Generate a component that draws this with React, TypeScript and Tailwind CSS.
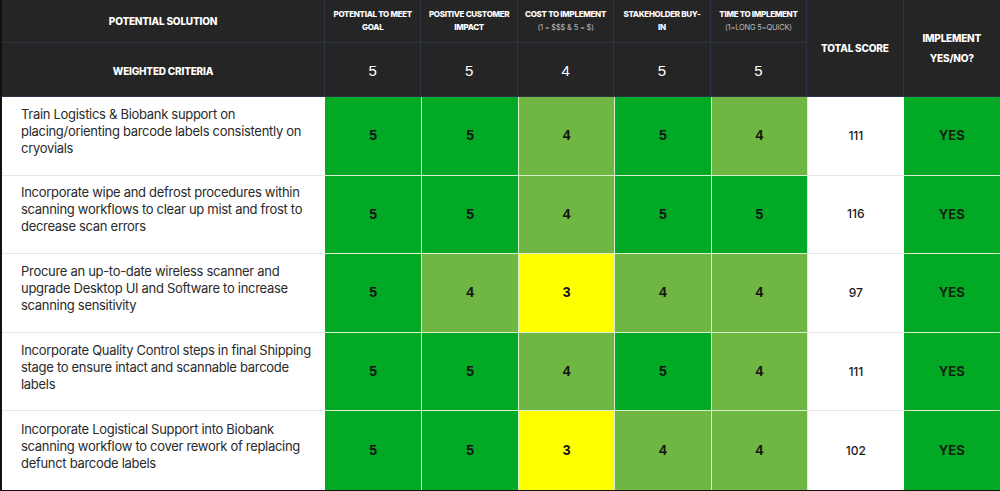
import React from "react";

const rows = [
  {
    lines: ["Train Logistics & Biobank support on", "placing/orienting barcode labels consistently on", "cryovials"],
    vals: [5, 5, 4, 5, 4],
    total: "111",
  },
  {
    lines: ["Incorporate wipe and defrost procedures within", "scanning workflows to clear up mist and frost to", "decrease scan errors"],
    vals: [5, 5, 4, 5, 5],
    total: "116",
  },
  {
    lines: ["Procure an up-to-date wireless scanner and", "upgrade Desktop UI and Software to increase", "scanning sensitivity"],
    vals: [5, 4, 3, 4, 4],
    total: "97",
  },
  {
    lines: ["Incorporate Quality Control steps in final Shipping", "stage to ensure intact and scannable barcode", "labels"],
    vals: [5, 5, 4, 5, 4],
    total: "111",
  },
  {
    lines: ["Incorporate Logistical Support into Biobank", "scanning workflow to cover rework of replacing", "defunct barcode labels"],
    vals: [5, 5, 3, 4, 4],
    total: "102",
  },
];

const valBg = (v: number) =>
  v === 5 ? "bg-[#02a925]" : v === 4 ? "bg-[#70b642]" : "bg-[#ffff00]";

const HeadCell = ({ l1, l2, sub }: { l1: string; l2?: string; sub?: string }) => (
  <div className="flex flex-col items-center justify-center border-r border-b border-[#2c3546] bg-[#252525] text-center leading-[13px]">
    <span className="text-[8px] font-extrabold tracking-[-0.3px] text-white">{l1}</span>
    {l2 && <span className="text-[8px] font-extrabold tracking-[-0.3px] text-white">{l2}</span>}
    {sub && <span className="text-[7.5px] font-normal tracking-[-0.2px] text-[#bdbdbd]">{sub}</span>}
  </div>
);

const WeightCell = ({ v }: { v: number }) => (
  <div className="flex items-center justify-center border-r border-b border-[#2c3546] bg-[#252525] pt-1 text-[15px] text-white [font-family:'Liberation_Sans',Arial,sans-serif]">
    {v}
  </div>
);

export default function App() {
  return (
    <div className="h-[491px] w-[1000px] overflow-hidden border-l-2 border-b border-[#111] bg-white [font-family:Inter,'Open_Sans',sans-serif]">
      <div className="grid h-full grid-cols-[323px_repeat(7,1fr)] grid-rows-[43px_54px_repeat(5,1fr)]">
        <div className="flex items-center justify-center border-r border-b border-[#2c3546] bg-[#252525] text-[10px] font-extrabold tracking-[-0.2px] text-white">
          POTENTIAL SOLUTION
        </div>
        <HeadCell l1="POTENTIAL TO MEET" l2="GOAL" />
        <HeadCell l1="POSITIVE CUSTOMER" l2="IMPACT" />
        <HeadCell l1="COST TO IMPLEMENT" sub="(1 = $$$ & 5 = $)" />
        <HeadCell l1="STAKEHOLDER BUY-" l2="IN" />
        <HeadCell l1="TIME TO IMPLEMENT" sub="(1=LONG 5=QUICK)" />
        <div className="row-span-2 flex items-center justify-center border-r border-b border-[#2c3546] bg-[#252525] text-[10px] font-extrabold tracking-[-0.2px] text-white">
          TOTAL SCORE
        </div>
        <div className="row-span-2 flex flex-col items-center justify-center border-b border-[#2c3546] bg-[#252525] text-center text-[10px] font-extrabold leading-[20px] tracking-[-0.2px] text-white">
          <span>IMPLEMENT</span>
          <span>YES/NO?</span>
        </div>

        <div className="flex items-center justify-center border-r border-b border-[#2c3546] bg-[#252525] pt-1 text-[10px] font-extrabold tracking-[-0.2px] text-white">
          WEIGHTED CRITERIA
        </div>
        <WeightCell v={5} />
        <WeightCell v={5} />
        <WeightCell v={4} />
        <WeightCell v={5} />
        <WeightCell v={5} />

        {rows.map((r, i) => (
          <React.Fragment key={i}>
            <div
              className={`flex flex-col justify-center pb-[9px] pl-[19px] text-[13px] leading-[17px] tracking-[-0.3px] text-[#2a2a2a] ${
                i < rows.length - 1 ? "border-b border-[#e6e6e6]" : ""
              }`}
            >
              {r.lines.map((l, j) => (
                <span key={j} className="whitespace-nowrap">
                  {l}
                </span>
              ))}
            </div>
            {r.vals.map((v, j) => (
              <div
                key={j}
                className={`flex items-center justify-center border-l border-[#d9efcf] text-[14px] font-bold text-[#141414] [font-family:'Liberation_Sans',Arial,sans-serif] ${valBg(
                  v
                )} ${i < rows.length - 1 ? "border-b" : ""} ${j === 0 ? "border-l-0" : ""}`}
              >
                {v}
              </div>
            ))}
            <div
              className={`flex items-center justify-center border-l border-[#d9efcf] bg-white text-[12px] font-medium text-[#1a1a1a] ${
                i < rows.length - 1 ? "border-b border-b-[#e6e6e6]" : ""
              }`}
            >
              {r.total}
            </div>
            <div
              className={`flex items-center justify-center bg-[#02a925] text-[13px] font-bold text-[#122012] ${
                i < rows.length - 1 ? "border-b border-[#d9efcf]" : ""
              }`}
            >
              YES
            </div>
          </React.Fragment>
        ))}
      </div>
    </div>
  );
}
